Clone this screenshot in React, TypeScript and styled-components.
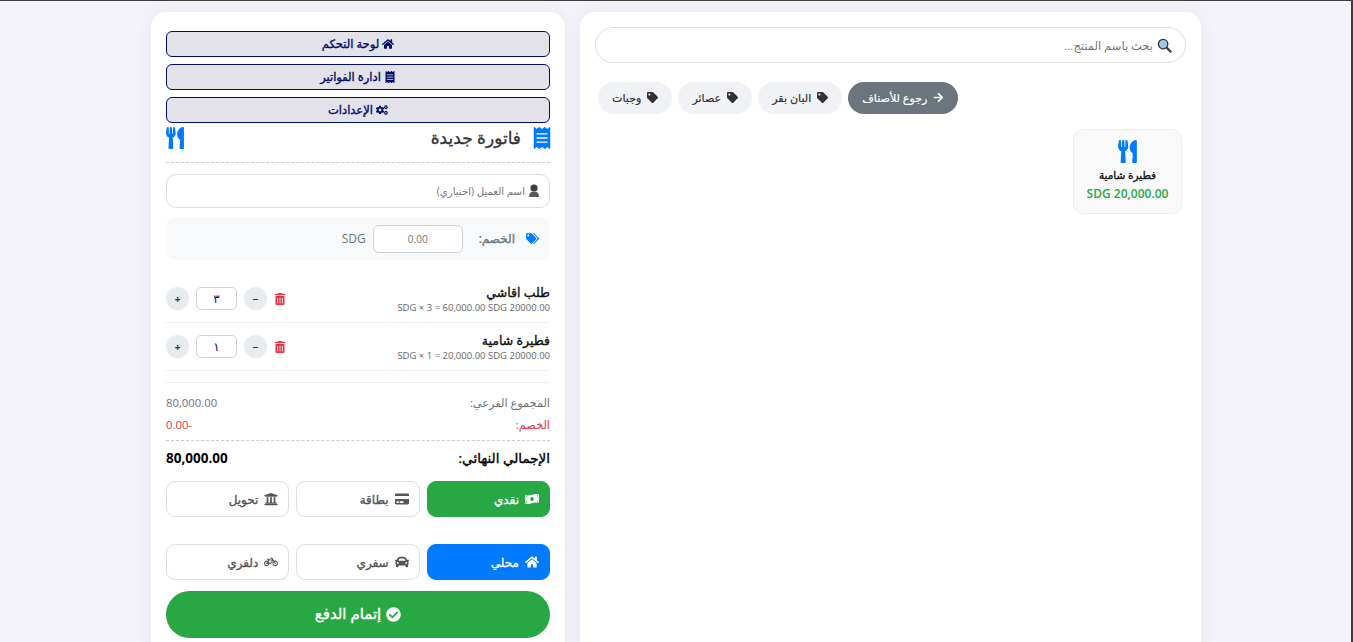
import React from 'react'
import styled, { createGlobalStyle, css } from 'styled-components'
import {
  FaArrowRight,
  FaBicycle,
  FaCar,
  FaCheckCircle,
  FaCogs,
  FaCreditCard,
  FaHome,
  FaMoneyBillWave,
  FaReceipt,
  FaTag,
  FaTags,
  FaTrashAlt,
  FaUniversity,
  FaUtensils,
} from 'react-icons/fa'

const GlobalStyle = createGlobalStyle`
  html, body {
    margin: 0;
    height: 642px;
    overflow: hidden;
  }
  body {
    background: #f3f3f9;
    font-family: "Open Sans", "Noto Sans", "DejaVu Sans", sans-serif;
    color: #212529;
    border-top: 1px solid #3c3c3c;
    border-right: 2px solid #3c3c3c;
    box-sizing: border-box;
  }
`

// the arabic fallback only has a very wide bold, so thicken the regular instead
const semiBold = css`
  font-weight: 400;
  -webkit-text-stroke: 0.35px currentColor;
`

const Page = styled.div`
  display: flex;
  gap: 15px;
  padding: 11px 0 0 151px;
  width: 1050px;
`

const Panel = styled.section`
  direction: rtl;
  background: #fff;
  border-radius: 15px 15px 0 0;
  height: 640px;
  box-sizing: border-box;
  box-shadow: 0 0 20px rgba(0, 0, 0, 0.05);
`

const InvoicePanel = styled(Panel)`
  width: 414px;
  padding: 19px 15px 0;
  display: flex;
  flex-direction: column;
`

const ProductsPanel = styled(Panel)`
  width: 621px;
  padding: 15px;
`

const NavButton = styled.button`
  display: flex;
  align-items: center;
  justify-content: center;
  gap: 3px;
  height: 26px;
  margin-bottom: 7px;
  padding: 0 0 2px;
  background: #e2e2e8;
  border: 1px solid #00106a;
  border-radius: 6px;
  color: #00106a;
  font: 400 11.5px "Open Sans", "DejaVu Sans", sans-serif;
  ${semiBold}
  svg {
    font-size: 12px;
    margin-top: 2px;
  }
`

const InvoiceHeader = styled.header`
  display: flex;
  align-items: center;
  justify-content: space-between;
  height: 27px;
  margin-top: -7px;
  padding: 1px 0 11px;
  border-bottom: 1px dashed #cccccc;
  color: #007bff;
  font-size: 22px;
  > svg {
    margin-left: -2px;
  }
`

const InvoiceTitle = styled.h2`
  display: flex;
  align-items: center;
  gap: 10px;
  margin: 0;
  color: #333;
  font-size: 17px;
  ${semiBold}
  svg {
    color: #007bff;
    font-size: 22px;
    margin-right: -3px;
  }
`

const Field = styled.div`
  position: relative;
  margin-top: 11px;
`

const FieldIcon = styled.svg`
  position: absolute;
  right: 10px;
  top: 10px;
  width: 12px;
  height: 13px;
`

const CustomerInput = styled.input`
  box-sizing: border-box;
  width: 100%;
  height: 34px;
  padding: 0 24px 0 10px;
  border: 1px solid #dddddd;
  border-radius: 10px;
  font: 10.2px "Open Sans", "DejaVu Sans", sans-serif;
  &::placeholder {
    color: #757575;
  }
`

const DiscountBox = styled.div`
  display: flex;
  align-items: center;
  height: 43px;
  margin-top: 9px;
  padding: 0 11px;
  background: #f8f9fa;
  border-radius: 10px;
  color: #6c757d;
  font-size: 12px;
`

const DiscountIcon = styled.span`
  display: flex;
  color: #007bff;
  font-size: 13px;
  margin-left: 11px;
`

const DiscountLabel = styled.span`
  margin-left: 16px;
  ${semiBold}
`

const DiscountInput = styled.input`
  box-sizing: border-box;
  width: 90px;
  height: 28px;
  margin-left: 7px;
  border: 1px solid #ced4da;
  border-radius: 6px;
  background: #fff;
  text-align: center;
  font: 10px "Open Sans", sans-serif;
  &::placeholder {
    color: #757575;
  }
`

const ItemList = styled.div`
  margin-top: 15px;
  padding-bottom: 11px;
  border-bottom: 1px solid #eeeeee;
`

const ItemRow = styled.div`
  display: flex;
  align-items: center;
  justify-content: space-between;
  height: 47px;
  border-bottom: 1px solid #eeeeee;
`

const ItemInfo = styled.div`
  display: flex;
  flex-direction: column;
  margin-top: 2px;
`

const ItemName = styled.span`
  color: #111;
  font-size: 12.5px;
  line-height: 16px;
  ${semiBold}
`

const ItemSub = styled.span`
  direction: ltr;
  text-align: right;
  color: #666;
  font-size: 9.5px;
  line-height: 14px;
`

const Controls = styled.div`
  display: flex;
  align-items: center;
  gap: 7px;
`

const TrashButton = styled.span`
  display: flex;
  color: #dc3545;
  font-size: 12px;
  margin-right: 1px;
`

const RoundButton = styled.span`
  display: flex;
  align-items: center;
  justify-content: center;
  width: 23px;
  height: 23px;
  border-radius: 50%;
  background: #e9ecef;
  color: #333;
  font-size: 10px;
  font-weight: 700;
`

const QtyBox = styled.span`
  box-sizing: border-box;
  display: flex;
  align-items: center;
  justify-content: center;
  width: 41px;
  height: 23px;
  border: 1px solid #ced4da;
  border-radius: 5px;
  color: #00106a;
  font-size: 12px;
`

const SummaryRow = styled.div<{ $danger?: boolean }>`
  display: flex;
  justify-content: space-between;
  align-items: center;
  height: 22px;
  color: ${(p) => (p.$danger ? '#dc3545' : '#6c757d')};
  font-size: 11.3px;
`

const Summary = styled.div`
  margin-top: 8px;
`

const SummaryValue = styled.span`
  direction: ltr;
`

const TotalRow = styled.div`
  display: flex;
  justify-content: space-between;
  align-items: center;
  height: 34px;
  margin: 5px 0 6px;
  border-top: 1px dashed #cccccc;
  color: #000;
  font-size: 13.5px;
  font-weight: 700;
`

const TotalLabel = styled.span`
  ${semiBold}
`

const OptionGrid = styled.div`
  display: grid;
  grid-template-columns: repeat(3, 1fr);
  gap: 7px;
  margin-bottom: 27px;
  &:last-of-type {
    margin-bottom: 11px;
  }
`

const Option = styled.button<{ $color?: string }>`
  display: flex;
  align-items: center;
  gap: 6px;
  height: 36px;
  padding: 0 10px;
  border-radius: 9px;
  border: 1px solid ${(p) => p.$color || '#dddddd'};
  background: ${(p) => p.$color || '#fff'};
  color: ${(p) => (p.$color ? '#fff' : '#555')};
  font: 400 12px "Open Sans", "DejaVu Sans", sans-serif;
  ${semiBold}
  svg {
    font-size: 14px;
  }
`

const PayButton = styled.button`
  display: flex;
  align-items: center;
  justify-content: center;
  gap: 5px;
  height: 47px;
  padding: 0 0 3px;
  border: 0;
  border-radius: 24px;
  background: #28a745;
  color: #fff;
  font: 400 15px "Open Sans", "DejaVu Sans", sans-serif;
  ${semiBold}
  svg {
    font-size: 15px;
    margin-top: 2px;
  }
`

const SearchWrap = styled.div`
  position: relative;
`

const SearchIcon = styled.svg`
  position: absolute;
  right: 14px;
  top: 11px;
  width: 15px;
  height: 15px;
`

const SearchInput = styled.input`
  box-sizing: border-box;
  width: 100%;
  height: 36px;
  padding: 0 32px 0 15px;
  border: 1px solid #dddddd;
  border-radius: 18px;
  font: 11.5px "Open Sans", "DejaVu Sans", sans-serif;
  &::placeholder {
    color: #757575;
  }
`

const Chips = styled.div`
  display: flex;
  gap: 6px;
  margin-top: 19px;
  padding-left: 3px;
  justify-content: flex-end;
`

const Chip = styled.button<{ $dark?: boolean }>`
  display: flex;
  align-items: center;
  gap: 6px;
  height: 32px;
  padding: 0 14px 1px;
  border: 0;
  border-radius: 16px;
  background: ${(p) => (p.$dark ? '#6c757d' : '#f0f2f5')};
  color: ${(p) => (p.$dark ? '#fff' : '#333')};
  font: 400 11.1px "Open Sans", "DejaVu Sans", sans-serif;
  -webkit-text-stroke: 0.2px currentColor;
  svg {
    font-size: 11px;
  }
`

const ProductCard = styled.div`
  box-sizing: border-box;
  width: 109px;
  height: 85px;
  margin: 15px 4px 0 0;
  border: 1px solid #eeeeee;
  border-radius: 10px;
  background: #f9f9f9;
  display: flex;
  flex-direction: column;
  align-items: center;
  padding-top: 10px;
`

const ProductIcon = styled.span`
  display: flex;
  color: #007bff;
  font-size: 23px;
`

const ProductName = styled.span`
  margin-top: 5px;
  color: #111;
  font-size: 10.5px;
  ${semiBold}
`

const ProductPrice = styled.span`
  margin-top: 3px;
  color: #28a745;
  font-size: 12px;
  font-weight: 600;
  direction: ltr;
`

const items = [
  { name: 'طلب اقاشي', qty: '٣', sub: 'SDG × 3 = 60,000.00 SDG 20000.00' },
  { name: 'فطيرة شامية', qty: '١', sub: 'SDG × 1 = 20,000.00 SDG 20000.00' },
]

const App: React.FC = () => (
  <>
    <GlobalStyle />
    <Page>
      <InvoicePanel>
        <NavButton><FaHome /> لوحة التحكم</NavButton>
        <NavButton><FaReceipt /> ادارة الفواتير</NavButton>
        <NavButton><FaCogs /> الإعدادات</NavButton>
        <InvoiceHeader>
          <InvoiceTitle><FaReceipt /> فاتورة جديدة</InvoiceTitle>
          <FaUtensils />
        </InvoiceHeader>
        <Field>
          <FieldIcon viewBox="0 0 12 13">
            <circle cx="6" cy="4" r="3.6" fill="#3f3f3f" />
            <path d="M1 13c0-3.4 1.6-5 3-5.2h4c1.4.2 3 1.8 3 5.2z" fill="#5a5a5a" />
          </FieldIcon>
          <CustomerInput placeholder="اسم العميل (اختياري)" />
        </Field>
        <DiscountBox>
          <DiscountIcon><FaTags /></DiscountIcon>
          <DiscountLabel>الخصم:</DiscountLabel>
          <DiscountInput placeholder="0.00" />
          <span>SDG</span>
        </DiscountBox>
        <ItemList>
          {items.map((item) => (
            <ItemRow key={item.name}>
              <ItemInfo>
                <ItemName>{item.name}</ItemName>
                <ItemSub>{item.sub}</ItemSub>
              </ItemInfo>
              <Controls>
                <TrashButton><FaTrashAlt /></TrashButton>
                <RoundButton>−</RoundButton>
                <QtyBox>{item.qty}</QtyBox>
                <RoundButton>+</RoundButton>
              </Controls>
            </ItemRow>
          ))}
        </ItemList>
        <Summary>
          <SummaryRow><span>المجموع الفرعي:</span><SummaryValue>80,000.00</SummaryValue></SummaryRow>
          <SummaryRow $danger><span>الخصم:</span><SummaryValue>0.00-</SummaryValue></SummaryRow>
        </Summary>
        <TotalRow><TotalLabel>الإجمالي النهائي:</TotalLabel><span>80,000.00</span></TotalRow>
        <OptionGrid>
          <Option $color="#28a745"><FaMoneyBillWave /> نقدي</Option>
          <Option><FaCreditCard /> بطاقة</Option>
          <Option><FaUniversity /> تحويل</Option>
        </OptionGrid>
        <OptionGrid>
          <Option $color="#007bff"><FaHome /> محلي</Option>
          <Option><FaCar /> سفري</Option>
          <Option><FaBicycle /> دلفري</Option>
        </OptionGrid>
        <PayButton><FaCheckCircle /> إتمام الدفع</PayButton>
      </InvoicePanel>
      <ProductsPanel>
        <SearchWrap>
          <SearchIcon viewBox="0 0 16 16">
            <path d="M10 10l4.5 4.5" stroke="#444" strokeWidth="2.4" strokeLinecap="round" />
            <circle cx="6.5" cy="6.5" r="5" fill="#9cc9ea" stroke="#333" strokeWidth="1.4" />
          </SearchIcon>
          <SearchInput placeholder="بحث باسم المنتج..." />
        </SearchWrap>
        <Chips>
          <Chip $dark><FaArrowRight /> رجوع للأصناف</Chip>
          <Chip><FaTag /> البان بقر</Chip>
          <Chip><FaTag /> عصائر</Chip>
          <Chip><FaTag /> وجبات</Chip>
        </Chips>
        <ProductCard>
          <ProductIcon><FaUtensils /></ProductIcon>
          <ProductName>فطيرة شامية</ProductName>
          <ProductPrice>SDG 20,000.00</ProductPrice>
        </ProductCard>
      </ProductsPanel>
    </Page>
  </>
)

export default App
